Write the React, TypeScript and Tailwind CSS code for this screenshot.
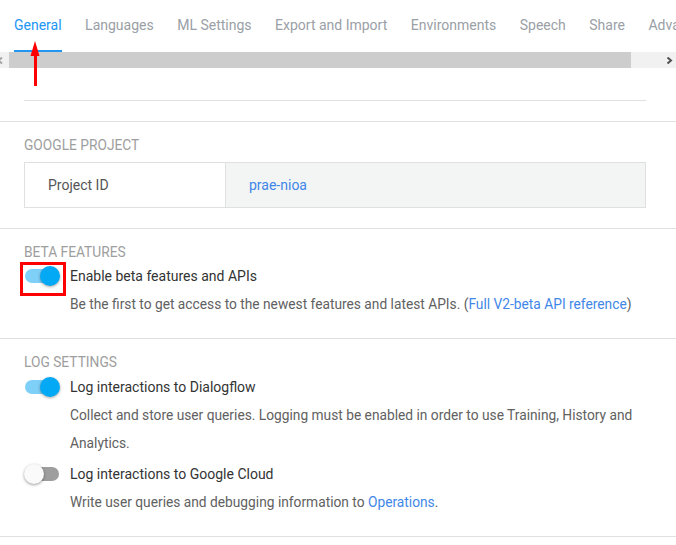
const font = { fontFamily: "Roboto, 'Liberation Sans', sans-serif" };

const tabs = [
  "General",
  "Languages",
  "ML Settings",
  "Export and Import",
  "Environments",
  "Speech",
  "Share",
  "Advanced",
];

function Toggle({ on }: { on: boolean }) {
  return (
    <div className="relative w-[34px] h-[14px] ml-[1px]">
      <div
        className={
          on
            ? "absolute inset-0 rounded-full bg-[#7fd0f8]"
            : "absolute inset-0 rounded-full bg-[#9e9e9e]"
        }
      />
      <div
        className={
          on
            ? "absolute top-[-3px] left-[15px] w-[20px] h-[20px] rounded-full bg-[#03a9f4] shadow-[0_1px_3px_rgba(0,0,0,0.35)]"
            : "absolute top-[-3px] left-[-1px] w-[20px] h-[20px] rounded-full bg-[#fafafa] shadow-[0_1px_3px_rgba(0,0,0,0.4)]"
        }
      />
    </div>
  );
}

function Heading({ children }: { children: string }) {
  return (
    <div className="text-[13.75px] leading-[18px] uppercase text-[#9e9e9e]">
      {children}
    </div>
  );
}

function SwitchRow({ on, title }: { on: boolean; title: string }) {
  return (
    <div className="flex items-center h-[28px]">
      <div className="w-[46px] flex items-center">
        <Toggle on={on} />
      </div>
      <div className="text-[14px] text-[#333]">{title}</div>
    </div>
  );
}

function Desc({ children }: { children: React.ReactNode }) {
  return (
    <div className="pl-[46px] text-[13.75px] leading-[28px] text-[#616161]">
      {children}
    </div>
  );
}

export default function App() {
  return (
    <div
      className="relative w-[676px] h-[545px] overflow-hidden bg-white"
      style={font}
    >
      {/* tabs */}
      <div className="flex h-[52px] gap-[23.5px] pl-[14px] whitespace-nowrap text-[14px] text-[#9aa0a6] overflow-hidden">
        {tabs.map((t, i) => (
          <div
            key={t}
            className={
              i === 0
                ? "relative flex items-center pb-[2px] text-[#2196f3]"
                : "relative flex items-center pb-[2px]"
            }
          >
            {t}
            {i === 0 && (
              <div className="absolute left-0 right-0 bottom-0 h-[2px] bg-[#2196f3]" />
            )}
          </div>
        ))}
      </div>

      {/* horizontal scrollbar */}
      <div className="flex h-[16px] bg-[#f1f1f1]">
        <div className="w-[9px] relative">
          <svg className="absolute left-[-3px] top-[5px]" width="7" height="7" viewBox="0 0 7 7">
            <path d="M5 0.5 L1.5 3.5 L5 6.5" stroke="#a3a3a3" strokeWidth="2" fill="none" />
          </svg>
        </div>
        <div className="w-[622px] bg-[#cdcdcd]" />
        <div className="flex-1 relative">
          <svg className="absolute left-[35px] top-[5px]" width="7" height="7" viewBox="0 0 7 7">
            <path d="M1.5 0.5 L5 3.5 L1.5 6.5" stroke="#505050" strokeWidth="2" fill="none" />
          </svg>
        </div>
      </div>

      {/* tail of previous section */}
      <div className="border-b border-[#e0e0e0] pb-[20px]">
        <div className="h-[33px] ml-[24px] mr-[30px] border-b border-[#e0e0e0]" />
      </div>

      {/* google project */}
      <div className="border-b border-[#e0e0e0] pt-[14px] pb-[20px] pl-[24px] pr-[30px]">
        <Heading>Google Project</Heading>
        <div className="mt-[8px] flex h-[46px] border border-[#e0e0e0] text-[14px]">
          <div className="w-[201px] border-r border-[#e0e0e0] pl-[23px] flex items-center text-[#555]">
            Project ID
          </div>
          <div className="flex-1 bg-[#f3f4f4] pl-[23px] flex items-center text-[#3f87e8]">
            prae-nioa
          </div>
        </div>
      </div>

      {/* beta features */}
      <div className="border-b border-[#e0e0e0] pt-[14px] pb-[20px] pl-[24px] pr-[30px]">
        <Heading>Beta Features</Heading>
        <div className="mt-[1px]">
          <SwitchRow on title="Enable beta features and APIs" />
        </div>
        <Desc>
          Be the first to get access to the newest features and latest APIs. (
          <span className="text-[#3f87e8]">Full V2-beta API reference</span>)
        </Desc>
      </div>

      {/* log settings */}
      <div className="border-b border-[#e0e0e0] pt-[14px] pb-[20px] pl-[24px] pr-[30px]">
        <Heading>Log Settings</Heading>
        <div className="mt-[2px]">
          <SwitchRow on title="Log interactions to Dialogflow" />
        </div>
        <Desc>
          Collect and store user queries. Logging must be enabled in order to use Training, History and
          Analytics.
        </Desc>
        <div className="mt-[3px]">
          <SwitchRow on={false} title="Log interactions to Google Cloud" />
        </div>
        <Desc>
          Write user queries and debugging information to{" "}
          <span className="text-[#3f87e8]">Operations</span>.
        </Desc>
      </div>

      {/* annotations */}
      <svg
        className="absolute left-0 top-0 pointer-events-none"
        width="676"
        height="545"
      >
        <polygon points="35,41 30.5,56 39.5,56" fill="#ff0000" />
        <rect x="34" y="54" width="3" height="32" fill="#ff0000" />
        <rect
          x="21.5"
          y="263.5"
          width="43"
          height="31"
          fill="none"
          stroke="#ff0000"
          strokeWidth="3"
        />
      </svg>
    </div>
  );
}
